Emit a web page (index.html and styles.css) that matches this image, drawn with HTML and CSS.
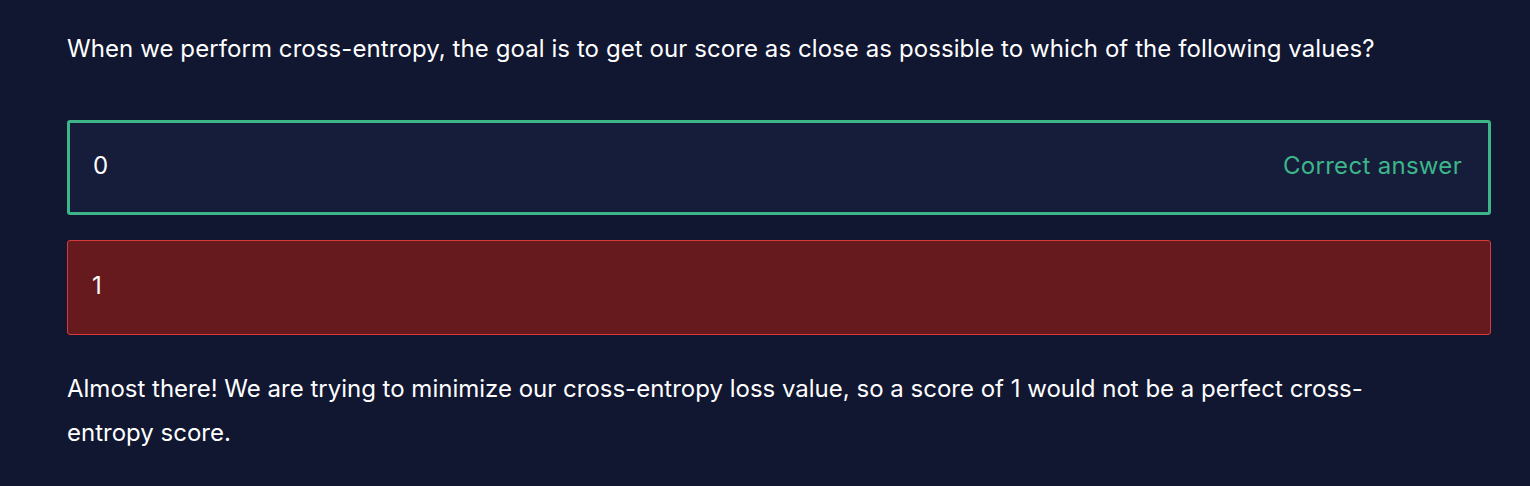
FILE: index.html
```html
<!DOCTYPE html>
<html lang="en">
<head>
<meta charset="utf-8">
<title>Quiz</title>
<link rel="stylesheet" href="styles.css">
</head>
<body>
<main class="quiz">
  <p class="question">When we perform cross-entropy, the goal is to get our score as close as possible to which of the following values?</p>
  <div class="options">
    <div class="option option--correct">
      <span class="option__value">0</span>
      <span class="option__label">Correct answer</span>
    </div>
    <div class="option option--wrong">
      <span class="option__value">1</span>
    </div>
  </div>
  <p class="feedback">Almost there! We are trying to minimize our cross-entropy loss value, so a score of 1 would not be a perfect cross-entropy score.</p>
</main>
</body>
</html>
```
FILE: styles.css
```css
html, body {
  margin: 0;
  background: #111631;
}
body {
  font-family: "Inter", "Noto Sans", sans-serif;
  color: #ffffff;
}
.quiz {
  width: 1424px;
  padding: 30px 0 0 67px;
}
.question {
  margin: 0;
  font-size: 24px;
  line-height: 38px;
  letter-spacing: 0.08px;
}
.options {
  display: flex;
  flex-direction: column;
  gap: 25px;
  margin-top: 52px;
}
.option {
  display: flex;
  align-items: center;
  justify-content: space-between;
  height: 95px;
  box-sizing: border-box;
  border-radius: 3px;
  font-size: 24px;
  padding-bottom: 4px;
}
.option--correct {
  background: #151d3a;
  border: 3px solid #3db589;
  padding-left: 23px;
  padding-right: 26px;
}
.option--wrong {
  background: #671a1d;
  border: 1px solid #d93a3a;
  padding-left: 24px;
  padding-right: 26px;
}
.option__label {
  color: #3db589;
  letter-spacing: 0.3px;
}
.feedback {
  margin: 32px 0 0;
  font-size: 24px;
  line-height: 44px;
  width: 1330px;
}
```
